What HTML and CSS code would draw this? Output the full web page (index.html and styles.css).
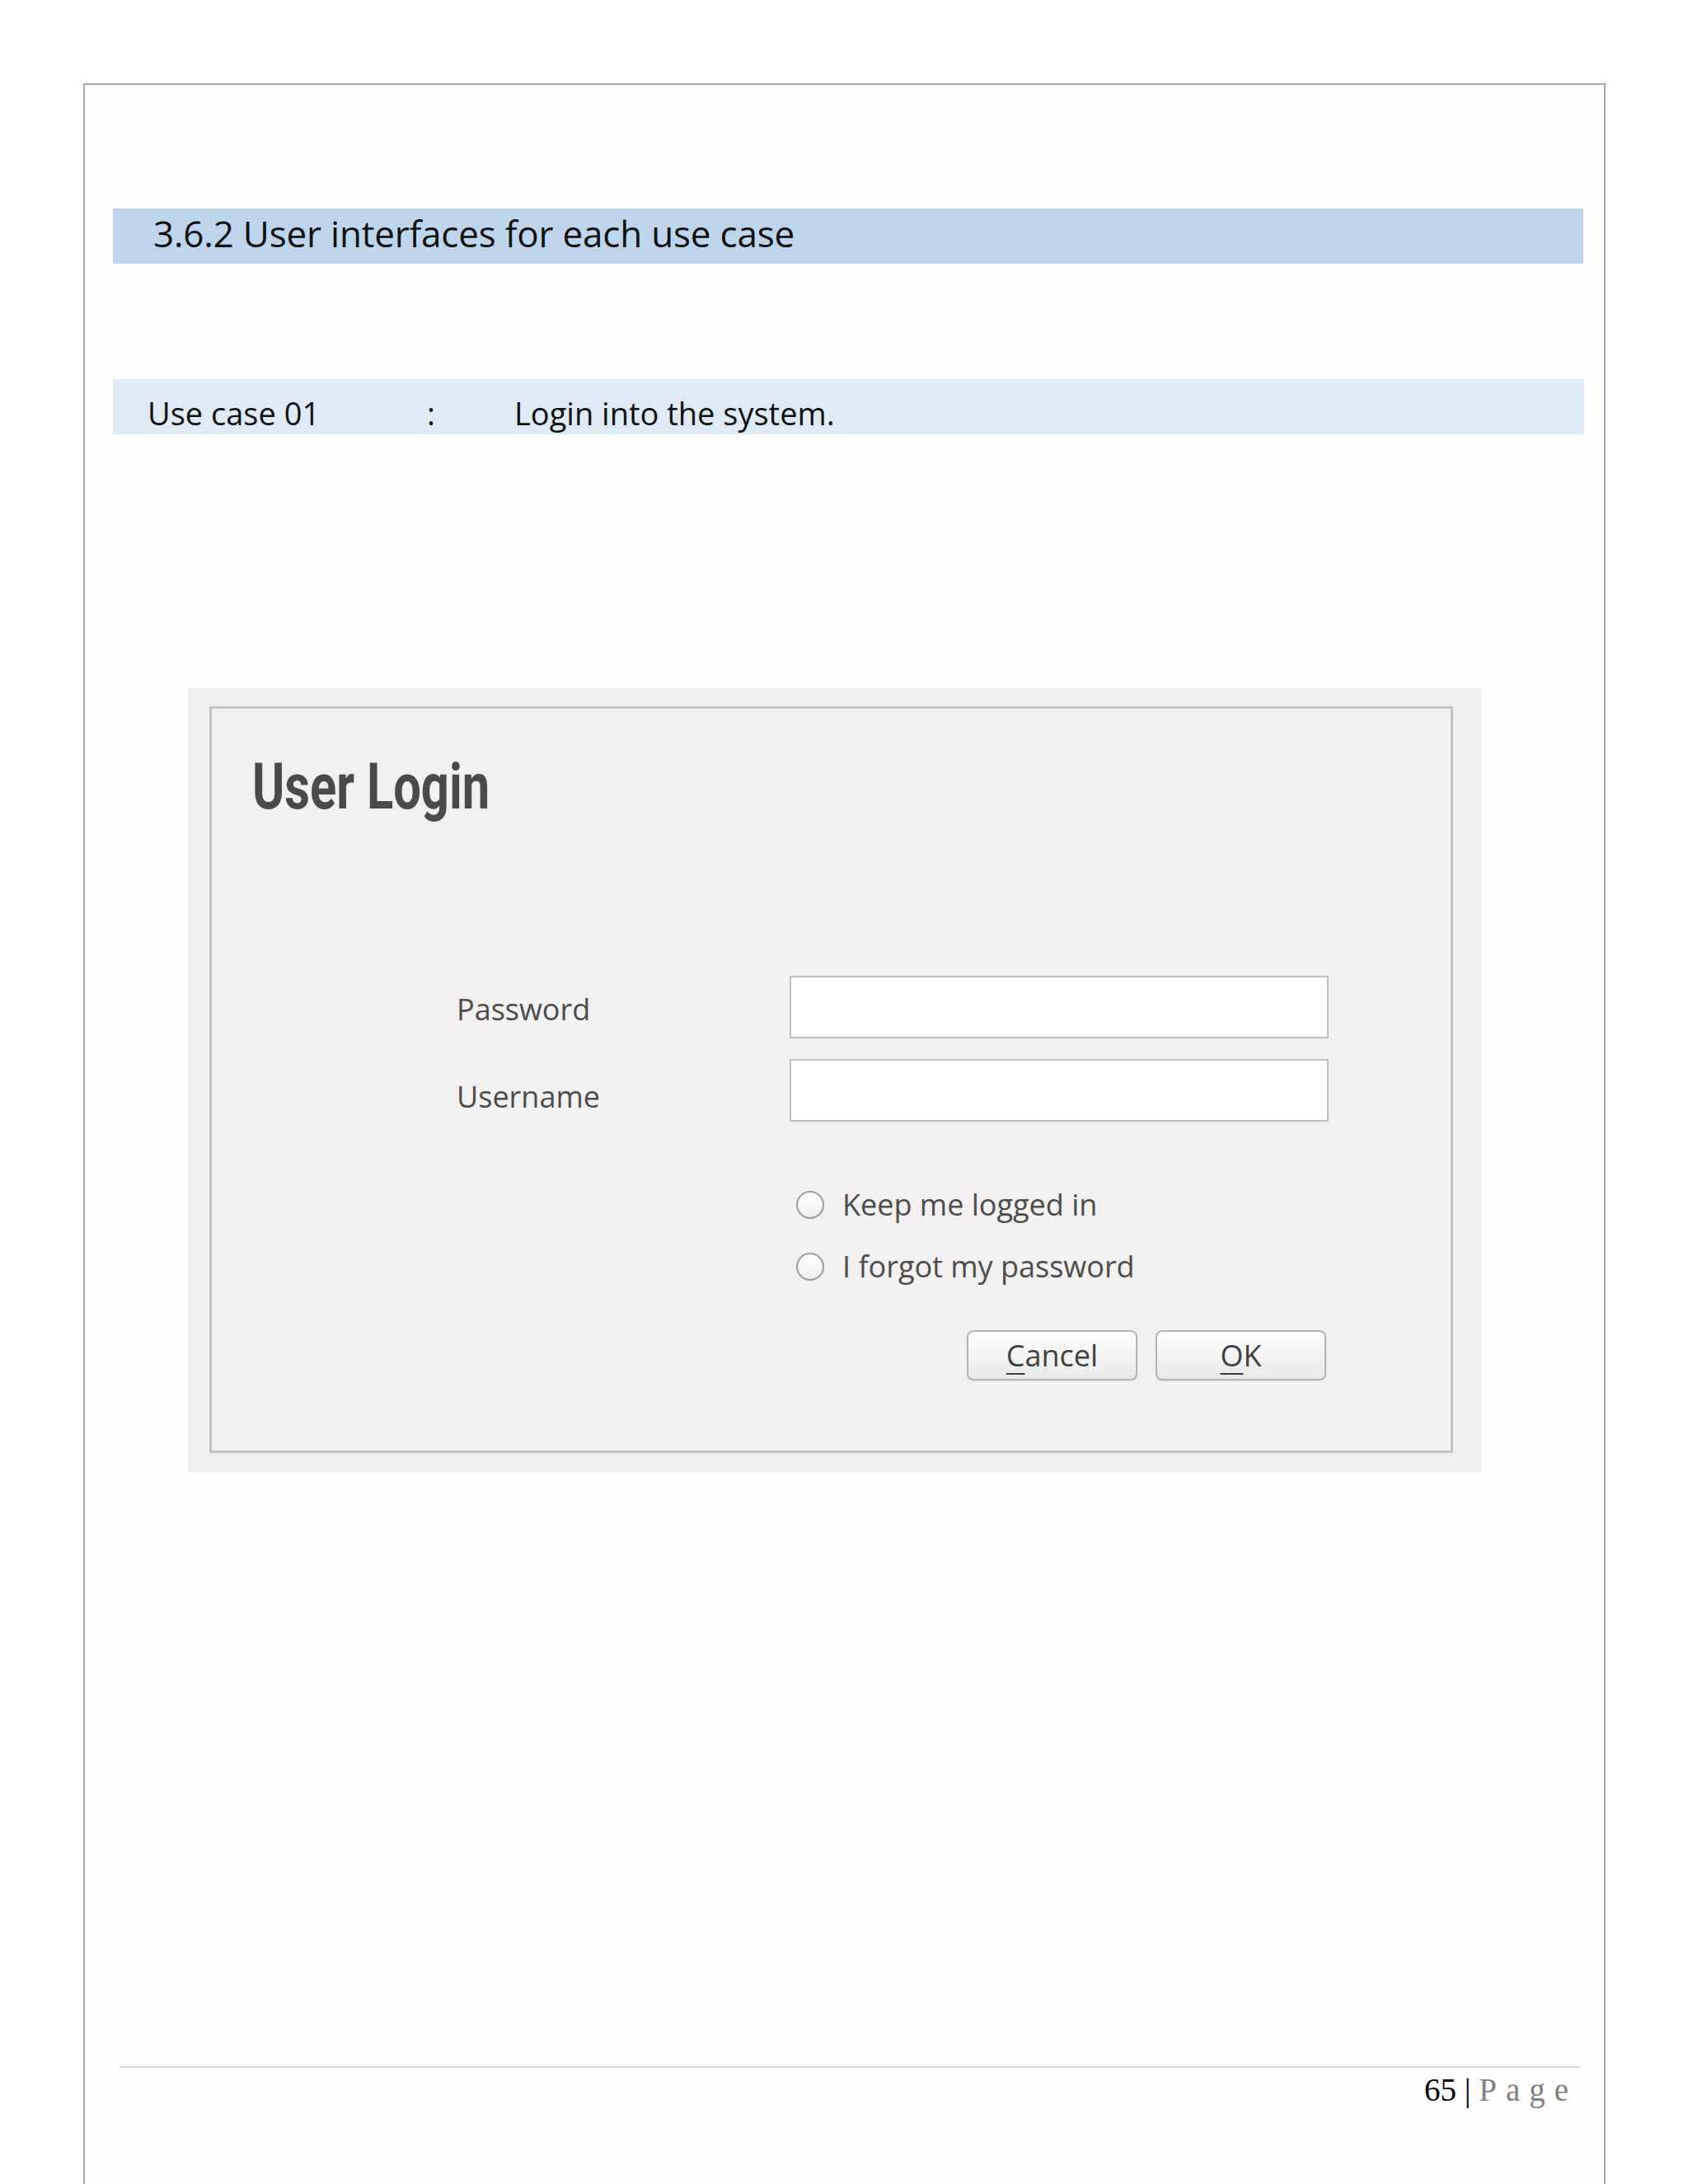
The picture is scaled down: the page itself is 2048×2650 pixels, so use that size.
FILE: index.html
```html
<!DOCTYPE html>
<html lang="en">
<head>
<meta charset="utf-8">
<title>3.6.2 User interfaces for each use case</title>
<link rel="stylesheet" href="styles.css">
</head>
<body>
<div class="page">
  <div class="section-title">3.6.2 User interfaces for each use case</div>
  <div class="usecase">
    <span class="uc-id">Use case 01</span>
    <span class="uc-colon">:</span>
    <span class="uc-name">Login into the system.</span>
  </div>
  <div class="shot">
    <div class="dialog">
      <h1 class="dlg-title"><span class="dlg-title-text">User Login</span></h1>
      <div class="form">
        <div class="fields">
          <label class="field-label">Password</label>
          <div class="input"></div>
          <label class="field-label field-label-low">Username</label>
          <div class="input"></div>
        </div>
        <div class="options">
          <div class="opt"><span class="radio"></span><span class="opt-text">Keep me logged in</span></div>
          <div class="opt"><span class="radio"></span><span class="opt-text">I forgot my password</span></div>
        </div>
        <div class="buttons">
          <div class="btn"><span class="mn">C</span>ancel</div>
          <div class="btn"><span class="mn">O</span>K</div>
        </div>
      </div>
    </div>
  </div>
  <div class="footer">
    <div class="pagenum"><span class="num">65</span> <span class="bar">|</span> <span class="pg">Page</span></div>
  </div>
</div>
</body>
</html>
```
FILE: styles.css
```css
html, body {
  margin: 0;
  padding: 0;
  background: #ffffff;
}
body {
  width: 2048px;
  height: 2650px;
  overflow: hidden;
  font-family: "Open Sans", "Noto Sans", sans-serif;
}
.page {
  margin: 101px 0 0 101px;
  width: 1847px;
  height: 2549px;
  box-sizing: border-box;
  border: 2px solid #a9a9a9;
  border-bottom: none;
  background: #fefefe;
  overflow: hidden;
}
.section-title {
  margin: 150px 25px 0 34px;
  height: 67px;
  box-sizing: border-box;
  padding: 0 0 8px 49px;
  background: #bdd6ee;
  display: flex;
  align-items: center;
  font-size: 44px;
  letter-spacing: -0.2px;
  color: #111;
  white-space: nowrap;
}
.usecase {
  margin: 140px 24px 0 34px;
  height: 67px;
  box-sizing: border-box;
  padding: 22px 0 0 42px;
  background: #deeaf6;
  display: grid;
  grid-template-columns: 339px 106px auto;
  font-size: 38px;
  line-height: 38px;
  color: #111;
  white-space: nowrap;
}
.shot {
  margin: 308px 0 0 125px;
  width: 1569px;
  box-sizing: border-box;
  padding: 22px 34px 24px 26px;
  background: #f0f0f0;
}
.dialog {
  height: 906px;
  box-sizing: border-box;
  border: 3px solid #c4c3c3;
  background: #f2f0f0;
  padding-top: 57px;
}
.dlg-title {
  margin: 0;
  padding-left: 49px;
  height: 77px;
  font-family: Roboto, "Open Sans", sans-serif;
  font-weight: 700;
  font-size: 77px;
  line-height: 77px;
  color: #4a4a4a;
  white-space: nowrap;
}
.dlg-title-text {
  display: inline-block;
  transform: scaleX(0.775);
  transform-origin: left center;
}
.form {
  margin: 190px 0 0 297px;
  font-size: 36px;
  color: #4c4c4c;
}
.fields {
  display: grid;
  grid-template-columns: 404px 654px;
  grid-auto-rows: 76px;
  row-gap: 25px;
  align-items: center;
}
.field-label {
  padding-top: 6px;
  line-height: 40px;
}
.field-label-low {
  padding-top: 15px;
}
.input {
  height: 76px;
  box-sizing: border-box;
  border: 2px solid #c0c0c0;
  background: #ffffff;
}
.options {
  margin: 76px 0 0 412px;
  display: flex;
  flex-direction: column;
  gap: 25px;
}
.opt {
  height: 50px;
  display: flex;
  align-items: center;
  gap: 22px;
}
.radio {
  width: 34px;
  height: 34px;
  box-sizing: border-box;
  border-radius: 50%;
  border: 2px solid #9d9d9d;
  background: linear-gradient(#ffffff, #efefef);
  flex: none;
}
.opt-text {
  line-height: 40px;
  white-space: nowrap;
}
.buttons {
  margin-top: 52px;
  width: 1055px;
  display: flex;
  justify-content: flex-end;
  gap: 22px;
}
.btn {
  width: 207px;
  height: 61px;
  box-sizing: border-box;
  border: 2px solid #b3b3b3;
  border-radius: 8px;
  background: linear-gradient(#fefefe, #e9e9e9);
  box-shadow: 0 1px 1px rgba(0, 0, 0, 0.08);
  display: flex;
  align-items: center;
  justify-content: center;
  font-size: 36px;
  line-height: 40px;
  color: #3f3f3f;
}
.mn {
  text-decoration: underline;
  text-decoration-thickness: 2px;
  text-underline-offset: 8px;
}
.footer {
  margin: 720px 28px 0 42px;
  border-top: 2px solid #d9d9d9;
  padding: 8px 4px 0 0;
}
.pagenum {
  text-align: right;
  font-family: "Liberation Serif", "Times New Roman", serif;
  font-size: 39px;
  line-height: 38px;
  color: #000;
  white-space: nowrap;
}
.pg {
  color: #7f7f7f;
  letter-spacing: 11px;
}
```
